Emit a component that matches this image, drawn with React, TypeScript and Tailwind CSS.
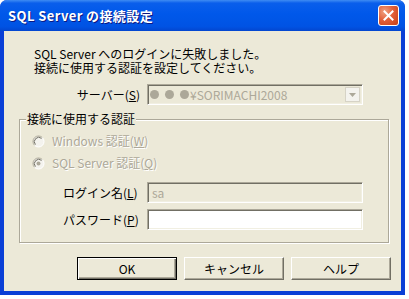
import React from "react";

const jp = "font-['Noto_Sans_CJK_JP','Noto_Sans',sans-serif]";

const sunken =
  "border border-t-[#ACA899] border-l-[#ACA899] border-b-white border-r-white shadow-[inset_1px_1px_0_#716F64,inset_-1px_-1px_0_#F1EFE2]";

function Radio({ checked }: { checked?: boolean }) {
  return (
    <svg width="13" height="13" viewBox="0 0 13 13" className="shrink-0">
      <circle cx="6.5" cy="6.5" r="5.5" fill="#F4F3EE" />
      <path d="M10.4 2.6 A5.5 5.5 0 0 0 2.6 10.4" fill="none" stroke="#ACA899" strokeWidth="1" />
      <path d="M9.6 3.4 A4.4 4.4 0 0 0 3.4 9.6" fill="none" stroke="#716F64" strokeWidth="1" />
      <path d="M2.6 10.4 A5.5 5.5 0 0 0 10.4 2.6" fill="none" stroke="#ffffff" strokeWidth="1" />
      {checked && <circle cx="6.5" cy="6.5" r="2" fill="#ACA899" />}
    </svg>
  );
}

function Btn({ label, def }: { label: string; def?: boolean }) {
  return (
    <button
      className={
        def
          ? "w-[100px] h-[23px] bg-[#ECE9D8] border border-black shadow-[inset_1px_1px_0_#fff,inset_-1px_-1px_0_#716F64,inset_-2px_-2px_0_#ACA899] text-[12px] font-normal text-black"
          : "w-[100px] h-[23px] bg-[#ECE9D8] border border-t-white border-l-white border-r-[#716F64] border-b-[#716F64] shadow-[inset_-1px_-1px_0_#ACA899] text-[12px] font-normal text-black"
      }
    >
      {label}
    </button>
  );
}

export default function App() {
  return (
    <div className={`w-[409px] h-[299px] bg-white ${jp}`}>
      <div className="w-[405px] h-[295px] flex flex-col rounded-t-[7px] overflow-hidden bg-[#0A3FD6]">
        {/* Title bar */}
        <div className="h-[31px] shrink-0 flex items-center justify-between pl-[8px] pr-[6px] bg-[linear-gradient(to_bottom,#3F8CF3_0%,#0A5EEB_10%,#0058EA_45%,#0053E4_85%,#0346CF_100%)]">
          <span className="text-white font-bold text-[13px] tracking-[0.4px] [text-shadow:1px_1px_0_#0A1883]">
            SQL Server の接続設定
          </span>
          <div className="w-[21px] h-[21px] rounded-[3px] border border-white bg-[radial-gradient(circle_at_30%_30%,#F0A282_0%,#E2603A_45%,#C63E15_100%)] flex items-center justify-center">
            <svg width="11" height="11" viewBox="0 0 11 11">
              <path d="M1.5 1.5 L9.5 9.5 M9.5 1.5 L1.5 9.5" stroke="white" strokeWidth="2" strokeLinecap="square" />
            </svg>
          </div>
        </div>

        {/* Client area */}
        <div className="flex-1 mx-[4px] mb-[4px] bg-[#ECE9D8] flex flex-col text-[12px] leading-[14px] text-black">
          <p className="pt-[16px] pl-[30px]">
            SQL Server へのログインに失敗しました。
            <br />
            接続に使用する認証を設定してください。
          </p>

          {/* Server row */}
          <div className="mt-[9px] flex items-center h-[21px]">
            <div className="w-[143px] text-right pr-[7px]">
              サーバー(<span className="underline">S</span>)
            </div>
            <div className={`w-[216px] h-[21px] flex items-center bg-[#ECE9D8] ${sunken}`}>
              <div className="flex-1 flex items-center pl-[2px] gap-[6px] text-[#ACA899]">
                <span className="w-[9px] h-[9px] rounded-full bg-[#ACA899]" />
                <span className="w-[9px] h-[9px] rounded-full bg-[#ACA899]" />
                <span className="w-[9px] h-[9px] rounded-full bg-[#ACA899] -mr-[5px]" />
                <span>¥SORIMACHI2008</span>
              </div>
              <div className="w-[15px] h-[15px] mr-[2px] bg-[#F4F3EE] border border-[#D6D3C6] flex items-center justify-center">
                <svg width="7" height="4" viewBox="0 0 7 4">
                  <path d="M0 0 H7 L3.5 4 Z" fill="#ACA899" />
                </svg>
              </div>
            </div>
          </div>

          {/* Group box */}
          <fieldset className="mt-[7px] ml-[15px] w-[370px] border border-[#ACA899] shadow-[inset_1px_1px_0_#fff,1px_1px_0_#fff] pl-[6px] pr-[6px] pb-[12px] pt-0">
            <legend className="px-[1px] bg-[#ECE9D8]">接続に使用する認証</legend>
            <div className="mt-[7px] flex flex-col gap-[6px] text-[#ACA899] [text-shadow:1px_1px_0_#fff]">
              <div className="h-[16px] flex items-center gap-[7px] ml-[6px]">
                <Radio />
                <span>
                  Windows 認証(<span className="underline">W</span>)
                </span>
              </div>
              <div className="h-[16px] flex items-center gap-[7px] ml-[6px]">
                <Radio checked />
                <span>
                  SQL Server 認証(<span className="underline">Q</span>)
                </span>
              </div>
            </div>

            <div className="mt-[11px] flex flex-col gap-[6px]">
              <div className="flex items-center h-[21px]">
                <div className="w-[121px] pl-[37px]">
                  ログイン名(<span className="underline">L</span>)
                </div>
                <div className={`w-[216px] h-[21px] flex items-center pl-[4px] bg-[#ECE9D8] text-[#ACA899] ${sunken}`}>
                  sa
                </div>
              </div>
              <div className="flex items-center h-[21px]">
                <div className="w-[121px] pl-[37px]">
                  パスワード(<span className="underline">P</span>)
                </div>
                <div className={`w-[216px] h-[21px] bg-white ${sunken}`} />
              </div>
            </div>
          </fieldset>

          {/* Buttons */}
          <div className="mt-[14px] pl-[73px] flex gap-[7px]">
            <Btn label="OK" def />
            <Btn label="キャンセル" />
            <Btn label="ヘルプ" />
          </div>
        </div>
      </div>
    </div>
  );
}
